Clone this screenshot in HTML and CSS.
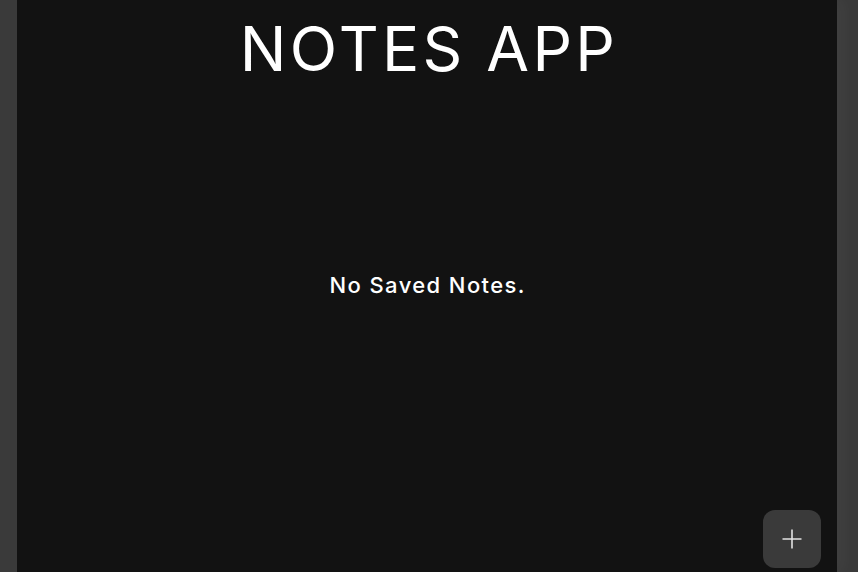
FILE: index.html
```html
<!DOCTYPE html>
<html lang="en">
<head>
<meta charset="utf-8">
<title>Notes App</title>
<link rel="stylesheet" href="styles.css">
</head>
<body>
<main class="app">
  <h1 class="title">NOTES APP</h1>
  <p class="empty">No Saved Notes.</p>
</main>
<button class="add-btn" aria-label="Add note">
  <svg width="22" height="22" viewBox="0 0 22 22" aria-hidden="true">
    <path d="M11 1.5v19M1.5 11h19" stroke="#e2e2e2" stroke-width="1.6" fill="none"/>
  </svg>
</button>
</body>
</html>
```
FILE: styles.css
```css
html, body {
  margin: 0;
  padding: 0;
  height: 100%;
}
body {
  background: #3a3a3a;
  font-family: Inter, "Open Sans", sans-serif;
  color: #ffffff;
  overflow: hidden;
}
.app {
  width: 820px;
  min-height: 100%;
  margin-left: 17px;
  background: #121212;
  box-shadow: 6px 0 14px rgba(255, 255, 255, 0.04);
  display: flex;
  flex-direction: column;
  align-items: center;
}
.title {
  margin: 0;
  padding: 18px 0 0 4px;
  font-size: 62px;
  line-height: 62px;
  font-weight: 400;
  letter-spacing: 3.3px;
}
.empty {
  margin: 194px 0 0;
  padding-left: 1.4px;
  font-size: 22px;
  line-height: 22px;
  font-weight: 500;
  letter-spacing: 1.4px;
}
.add-btn {
  position: fixed;
  left: 763px;
  top: 510px;
  width: 58px;
  height: 58px;
  border: none;
  border-radius: 12px;
  background: #3a3a3a;
  display: flex;
  align-items: center;
  justify-content: center;
  padding: 0;
  cursor: pointer;
}
```
